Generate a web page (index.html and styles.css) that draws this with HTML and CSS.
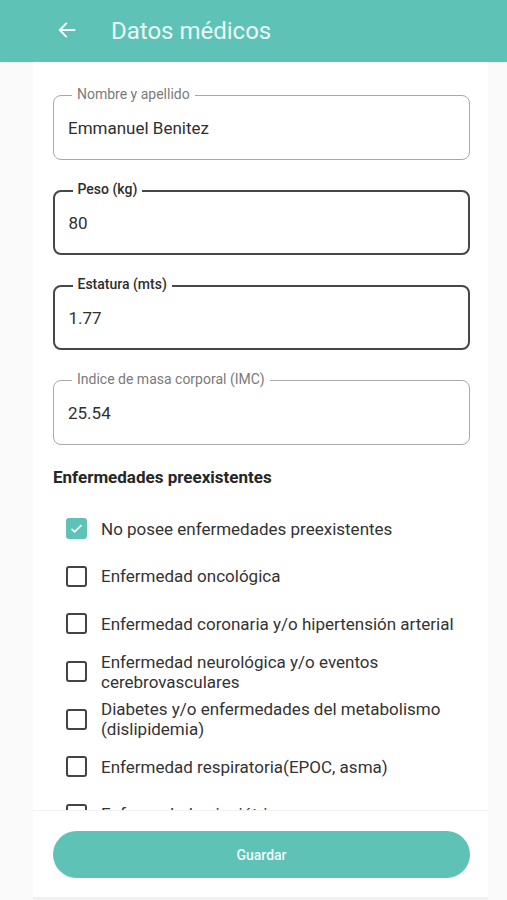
FILE: index.html
```html
<!DOCTYPE html>
<html lang="es">
<head>
<meta charset="utf-8">
<title>Datos médicos</title>
<link rel="stylesheet" href="styles.css">
</head>
<body>
<header class="topbar">
  <svg class="back" width="22" height="22" viewBox="0 0 24 24"><path d="M20 12H5M11 5l-7 7 7 7" fill="none" stroke="#fff" stroke-width="2" stroke-linecap="square"/></svg>
  <h1 class="title">Datos médicos</h1>
</header>
<div class="column">
  <main class="scroll">
    <div class="field">
      <span class="label">Nombre y apellido</span>
      <span class="value">Emmanuel Benitez</span>
    </div>
    <div class="field field-active">
      <span class="label">Peso (kg)</span>
      <span class="value">80</span>
    </div>
    <div class="field field-active">
      <span class="label">Estatura (mts)</span>
      <span class="value">1.77</span>
    </div>
    <div class="field">
      <span class="label">Indice de masa corporal (IMC)</span>
      <span class="value">25.54</span>
    </div>
    <h2 class="section">Enfermedades preexistentes</h2>
    <ul class="checks">
      <li class="check"><span class="box box-on"><svg width="15" height="15" viewBox="0 0 24 24"><path d="M4 12.5l5 5L20 6.5" fill="none" stroke="#fff" stroke-width="2.6"/></svg></span><span class="ctext">No posee enfermedades preexistentes</span></li>
      <li class="check"><span class="box"></span><span class="ctext">Enfermedad oncológica</span></li>
      <li class="check"><span class="box"></span><span class="ctext">Enfermedad coronaria y/o hipertensión arterial</span></li>
      <li class="check"><span class="box"></span><span class="ctext">Enfermedad neurológica y/o eventos<br>cerebrovasculares</span></li>
      <li class="check"><span class="box"></span><span class="ctext">Diabetes y/o enfermedades del metabolismo<br>(dislipidemia)</span></li>
      <li class="check"><span class="box"></span><span class="ctext">Enfermedad respiratoria(EPOC, asma)</span></li>
      <li class="check"><span class="box"></span><span class="ctext">Enfermedad psiquiátrica</span></li>
    </ul>
  </main>
  <footer class="bottom">
    <button class="save">Guardar</button>
  </footer>
  <div class="strip"></div>
</div>
</body>
</html>
```
FILE: styles.css
```css
* { box-sizing: border-box; }
html, body { margin: 0; padding: 0; }
body {
  background: #fafafa;
  font-family: Roboto, "Noto Sans", "Liberation Sans", sans-serif;
  color: #333;
  height: 900px;
  overflow: hidden;
}
.topbar {
  height: 62px;
  background: #5ec2b6;
  display: flex;
  align-items: center;
  padding-left: 56px;
  box-shadow: 0 1px 2px rgba(0,0,0,0.08);
}
.back { display: block; margin-right: 33px; margin-top: -2px; }
.title {
  margin: 0;
  font-size: 24px;
  font-weight: 400;
  color: #eaf8f5;
  letter-spacing: 0;
}
.column {
  width: 455px;
  margin-left: 33px;
  background: #fff;
}
.scroll {
  height: 748px;
  overflow: hidden;
  padding: 33px 18px 0 20px;
}
.field {
  position: relative;
  height: 65px;
  border: 1.5px solid #a8a8a8;
  border-radius: 8px;
  display: flex;
  align-items: center;
  padding-left: 14px;
  margin-bottom: 30px;
}
.field-active { border: 2px solid #474747; padding-left: 13.5px; }
.label {
  position: absolute;
  top: -10.5px;
  left: 18px;
  padding: 0 5px;
  background: #fff;
  font-size: 14px;
  line-height: 17px;
  color: #7a7a7a;
}
.field-active .label { color: #2e2e2e; font-weight: 500; top: -11px; left: 17.5px; }
.value { font-size: 17px; color: #2f2f2f; margin-top: 1px; }
.section {
  margin: -9px 0 0;
  font-size: 17px;
  line-height: 22px;
  font-weight: 700;
  color: #262626;
}
.checks {
  list-style: none;
  margin: 17px 0 0;
  padding: 0 0 0 13px;
}
.check {
  height: 47.6px;
  display: flex;
  align-items: center;
}
.box {
  flex: none;
  width: 21px;
  height: 21px;
  border: 2px solid #444;
  border-radius: 3px;
  margin-right: 14px;
  display: flex;
  align-items: center;
  justify-content: center;
}
.box-on { background: #5ec2b6; border-color: #5ec2b6; }
.ctext { font-size: 17px; line-height: 20px; color: #333; }
.bottom {
  height: 87px;
  border-top: 1px solid #f1f1f1;
  padding: 20px 18px 0 20px;
}
.save {
  display: block;
  width: 100%;
  height: 47px;
  border: 0;
  border-radius: 24px;
  background: #5ec2b6;
  color: #f4fbfa;
  font-family: Roboto, "Noto Sans", "Liberation Sans", sans-serif;
  font-size: 14px;
  font-weight: 500;
}
.strip { height: 3px; background: #f0f0f0; }
```
